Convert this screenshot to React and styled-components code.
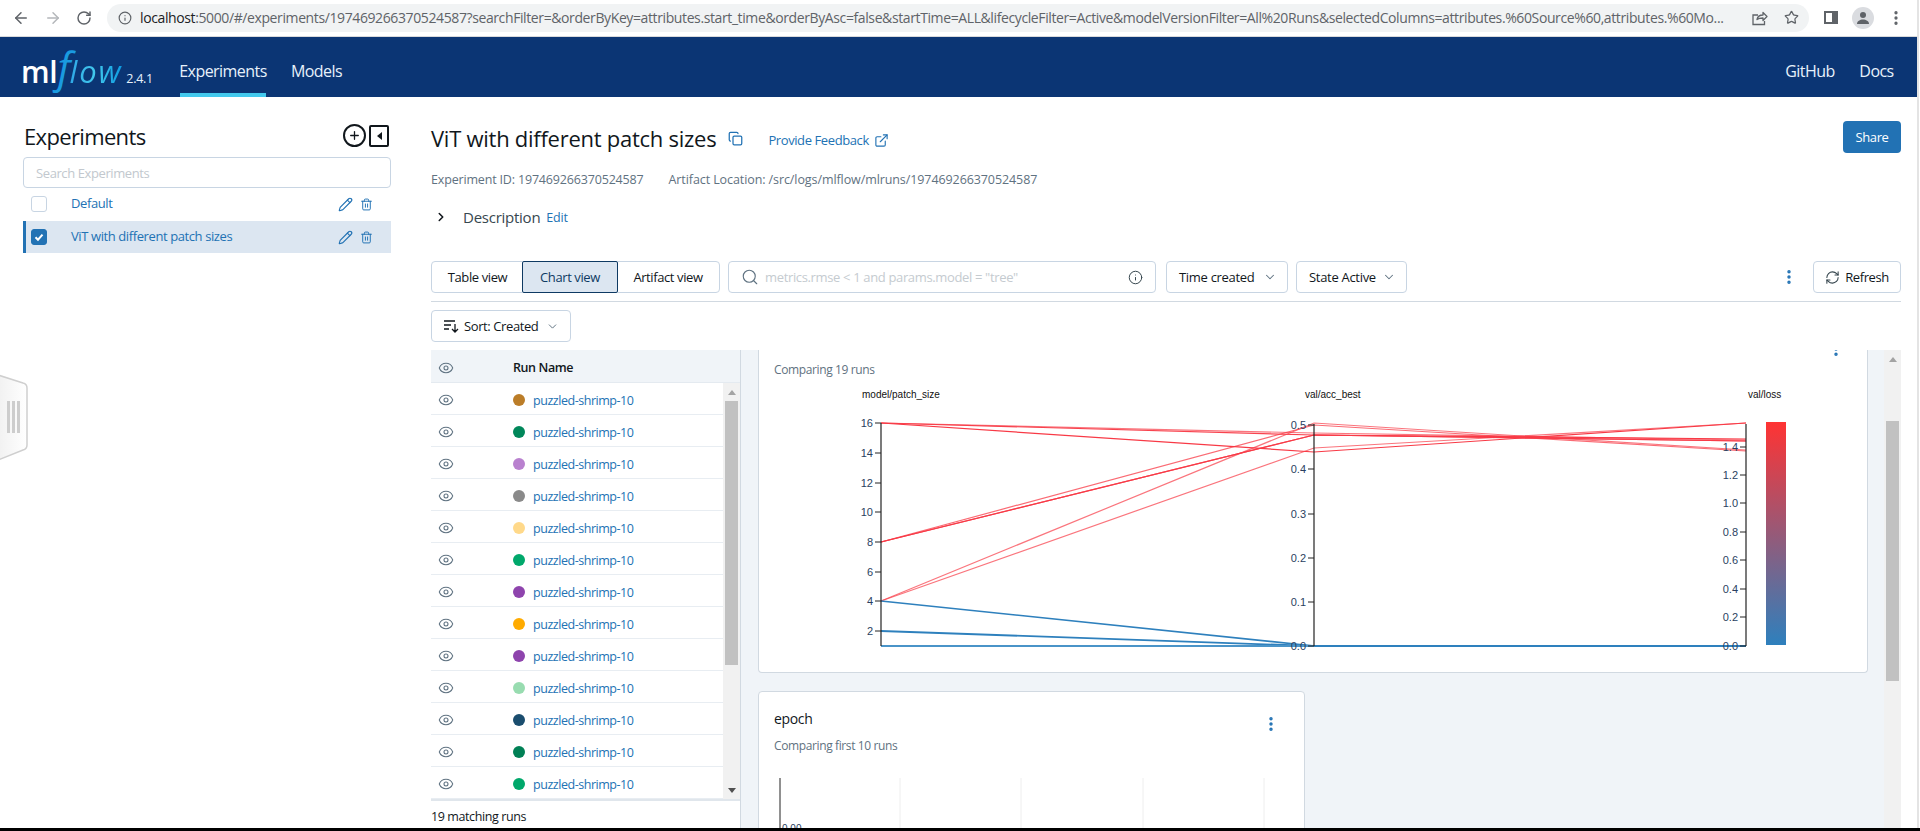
import React from 'react';
import styled, { createGlobalStyle } from 'styled-components';
import { ArrowLeft, ArrowRight, RotateCw, Info, Star, Pencil, Trash2, ChevronDown, ChevronRight, Search, Eye, Copy, ExternalLink, RefreshCw, MoreVertical, Plus } from 'lucide-react';

const UI = '"Open Sans", "Noto Sans", "Liberation Sans", sans-serif';
const BLUE = '#2272b4';
const Global = createGlobalStyle`
  html, body { margin: 0; padding: 0; height: 831px; overflow: hidden; background: #fff; }
  body { font-family: ${UI}; color: #11171c; }
  * { box-sizing: border-box; }
`;
const Frame = styled.div`width: 1920px; height: 831px; display: flex; flex-direction: column; overflow: hidden;`;
const Window = styled.div`flex: 1; min-height: 0; width: 1919px; border-right: 2px solid #e4e4e4; display: flex; flex-direction: column; position: relative;`;
const BottomEdge = styled.div`height: 3px; background: #000; flex: none;`;

const Chrome = styled.div`height: 37px; flex: none; display: flex; align-items: center; border-bottom: 1px solid #d9dadc; background: #fff; padding-bottom: 1px;`;
const ChromeNav = styled.div`width: 107px; padding-left: 12px; display: flex; gap: 14px; align-items: center; color: #5f6368; flex: none;`;
const Omni = styled.div`width: 1702px; height: 28px; border-radius: 14px; background: #f1f3f4; display: flex; align-items: center; padding: 0 10px 0 11px; flex: none;`;
const Url = styled.div`flex: 1; min-width: 0; margin-left: 8px; font-size: 14px; letter-spacing: -0.39px; color: #5f6368; white-space: nowrap; overflow: hidden; b { font-weight: 400; color: #202124; }`;
const OmniIcons = styled.div`display: flex; align-items: center; gap: 16px; margin-left: 6px; color: #5f6368; flex: none;`;
const ChromeRight = styled.div`display: flex; align-items: center; margin-left: 15px; color: #5f6368;`;
const PanelIcon = styled.div`width: 14px; height: 13px; border: 2px solid #5f6368; border-right-width: 6px; margin-right: 14px;`;
const Avatar = styled.div`width: 22px; height: 22px; border-radius: 50%; background: #dadce0; display: flex; align-items: center; justify-content: center; margin-right: 13px;`;

const Nav = styled.div`height: 60px; flex: none; background: #0b3574; display: flex; align-items: stretch; color: #e7f1fb; padding-left: 21px; padding-right: 23px;`;
const Logo = styled.div`width: 159px; height: 60px; display: flex; align-items: baseline; flex: none; overflow: visible; padding-top: 4px;`;
const LogoMl = styled.span`font: 600 30px/52px "Open Sans", sans-serif; color: #fff; letter-spacing: -0.3px;`;
const LogoF = styled.span`font: italic 500 42px/52px "Open Sans", sans-serif; color: #1a9be0;`;
const LogoLow = styled.span`font: italic 500 31px/52px "Open Sans", sans-serif; letter-spacing: 1.8px; margin-left: -1px; background: linear-gradient(90deg, #2fa8e6, #43c9ed 50%, #0c9ae0); -webkit-background-clip: text; background-clip: text; -webkit-text-fill-color: transparent;`;
const LogoVer = styled.span`font-size: 12.5px; margin-left: 4px; color: #e7f1fb; letter-spacing: -0.3px;`;
const NavLink = styled.div`
  font-size: 16px; line-height: 22px; display: flex; align-items: center; padding-top: 12px; margin-right: ${p => p.$mr}px; letter-spacing: -0.55px;
  border-bottom: 4px solid ${p => (p.$active ? '#43c9ed' : 'transparent')};
  width: ${p => p.$w}px; justify-content: center;
`;
const NavSpacer = styled.div`flex: 1;`;

const Body = styled.div`flex: 1; min-height: 0; display: flex;`;
const Sidebar = styled.div`width: 431px; flex: none; padding: 24px 40px 0 23px; position: relative;`;
const SideHead = styled.div`height: 36px; display: flex; justify-content: space-between; align-items: flex-start; padding-right: 2px;`;
const SideTitle = styled.div`font-size: 22px; line-height: 32px; padding-left: 1px; margin-top: -1px; letter-spacing: -0.65px; font-weight: 500;`;
const SideIcons = styled.div`display: flex; align-items: center; gap: 3px; padding-top: 3px;`;
const PlusCircle = styled.div`width: 23px; height: 23px; border: 2px solid #11171c; border-radius: 50%; display: flex; align-items: center; justify-content: center;`;
const ToggleBox = styled.div`width: 20px; height: 22px; border: 2px solid #11171c; border-radius: 2px; display: flex; align-items: center; justify-content: center; &::before { content: ''; border: 4px solid transparent; border-right: 5px solid #11171c; border-left: 0; }`;
const SideSearch = styled.div`height: 31px; border: 1px solid #c8d5e3; border-radius: 4px; display: flex; align-items: center; padding-left: 12px; font-size: 13px; letter-spacing: -0.4px; color: #c2c8ce;`;
const ExpRow = styled.div`
  height: 32px; margin-top: ${p => (p.$selected ? 1 : 0)}px; display: flex; align-items: center;
  background: ${p => (p.$selected ? '#dce6f1' : '#fff')};
  border-left: 3px solid ${p => (p.$selected ? BLUE : 'transparent')};
  padding-left: 5px;
`;
const Check = styled.div`
  width: 16px; height: 16px; border-radius: 3px; flex: none; display: flex; align-items: center; justify-content: center;
  border: 1px solid ${p => (p.$on ? BLUE : '#c8d5e3')}; background: ${p => (p.$on ? BLUE : '#fff')};
`;
const ExpName = styled.div`flex: 1; margin-left: 24px; padding-bottom: 2px; font-size: 13px; letter-spacing: -0.4px; color: ${BLUE};`;
const ExpActions = styled.div`display: flex; align-items: center; gap: 7px; padding-right: 18px; color: ${BLUE};`;

const Main = styled.div`flex: 1; min-width: 0; padding: 24px 16px 0 0; display: flex; flex-direction: column;`;
const HeadRow = styled.div`height: 32px; display: flex; align-items: center;`;
const PageTitle = styled.div`font-size: 22px; letter-spacing: -0.26px; font-weight: 500; color: #11171c; margin-top: 2px;`;
const CopyWrap = styled.div`margin-left: 12px; margin-top: 3px; color: ${BLUE}; display: flex;`;
const Feedback = styled.div`margin-left: 25px; margin-top: 6px; display: flex; align-items: center; gap: 5px; font-size: 13px; letter-spacing: -0.4px; color: ${BLUE};`;
const ShareBtn = styled.div`margin-left: auto; width: 58px; height: 32px; border-radius: 4px; background: ${BLUE}; color: #fff; font-size: 13px; letter-spacing: -0.4px; display: flex; align-items: center; justify-content: center;`;
const Meta = styled.div`margin-top: 16px; height: 20px; display: flex; gap: 25px; align-items: center; font-size: 12.5px; letter-spacing: -0.17px; color: #5f7281;`;
const MetaWide = styled.span`letter-spacing: -0.09px;`;
const Desc = styled.div`margin-top: 16px; height: 24px; display: flex; align-items: center; padding-left: 3px;`;
const DescText = styled.div`margin-left: 15px; font-size: 15px; letter-spacing: -0.25px; color: #37474f;`;
const DescEdit = styled.div`margin-left: 6px; font-size: 12.5px; letter-spacing: -0.2px; color: ${BLUE};`;

const Toolbar = styled.div`margin-top: 32px; height: 32px; display: flex; align-items: stretch;`;
const Tabs = styled.div`display: flex; width: 289px; border: 1px solid #c8d5e3; border-radius: 4px;`;
const Tab = styled.div`
  width: ${p => p.$w}px; display: flex; align-items: center; justify-content: center; font-size: 13px; letter-spacing: -0.4px; color: #11171c;
  ${p => p.$active && 'background:#dce6f1; outline: 1px solid #0e3a63; border-radius: 1px; color:#0e3a63;'}
`;
const Query = styled.div`width: 428px; margin-left: 8px; border: 1px solid #c8d5e3; border-radius: 4px; display: flex; align-items: center; padding: 0 12px; color: #5f7281;`;
const QueryText = styled.div`flex: 1; margin-left: 6px; font-size: 13px; letter-spacing: -0.35px; color: #c5cbd0;`;
const SelectBtn = styled.div`width: ${p => p.$w}px; margin-left: ${p => p.$ml}px; border: 1px solid #c8d5e3; border-radius: 4px; display: flex; align-items: center; justify-content: space-between; padding: 0 10px 0 12px; font-size: 13px; letter-spacing: -0.3px; font-weight: 500; color: #11171c; flex: none;`;
const Kebab = styled.div`margin-left: auto; margin-right: 12px; width: 24px; display: flex; align-items: center; justify-content: center; color: ${BLUE};`;
const RefreshBtn = styled.div`width: 88px; border: 1px solid #c8d5e3; border-radius: 4px; display: flex; align-items: center; justify-content: center; gap: 5px; font-size: 13px; letter-spacing: -0.4px; color: #11171c;`;
const Rule = styled.div`height: 1px; background: #d1d9e1; margin-top: 8px; flex: none;`;
const SortBtn = styled.div`margin-top: 8px; width: 140px; height: 32px; border: 1px solid #c8d5e3; border-radius: 4px; display: flex; align-items: center; padding: 0 11px; font-size: 13px; letter-spacing: -0.4px; color: #11171c; flex: none; span { margin-left: 5px; flex: 1; }`;

const Compare = styled.div`margin-top: 8px; flex: 1; min-height: 0; display: flex;`;
const Runs = styled.div`width: 310px; flex: none; display: flex; flex-direction: column; border-right: 1px solid #d1d9e1;`;
const RunsHead = styled.div`height: 33px; flex: none; background: #f0f4f8; border-bottom: 1px solid #e4eaf0; display: flex; align-items: center; padding-top: 3px; font-size: 12.5px; font-weight: 600; letter-spacing: -0.4px; color: #11171c;`;
const EyeCell = styled.div`width: 82px; padding-left: 7px; color: #5f7281; display: flex; flex: none;`;
const RunsBody = styled.div`height: 418px; flex: none; display: flex; border-bottom: 2px solid #e0e6ec; overflow: hidden;`;
const RunsList = styled.div`flex: 1; min-width: 0;`;
const RunRow = styled.div`height: 32px; display: flex; align-items: center; padding-top: 3px; border-bottom: 1px solid #e8edf2; font-size: 12.5px; letter-spacing: -0.46px; color: ${BLUE};`;
const Dot = styled.div`width: 12px; height: 12px; border-radius: 50%; background: ${p => p.$c}; margin-right: 8px; flex: none;`;
const ScrollTrack = styled.div`width: ${p => p.$w}px; flex: none; background: #f1f1f1; display: flex; flex-direction: column; align-items: center;`;
const Arrow = styled.div`height: ${p => p.$h}px; width: 100%; flex: none; display: flex; align-items: center; justify-content: center; &::before { content: ''; border: 4px solid transparent; ${p => (p.$down ? 'border-top: 5px solid #505050; border-bottom: 0;' : 'border-bottom: 5px solid #a3a3a3; border-top: 0;')} }`;
const Thumb = styled.div`width: ${p => p.$w}px; height: ${p => p.$h}px; margin-top: ${p => p.$mt || 0}px; background: #c1c1c1; flex: none;`;
const Grow = styled.div`flex: 1;`;
const RunsFoot = styled.div`height: 27px; display: flex; align-items: center; padding-top: 3px; font-size: 12.5px; letter-spacing: -0.4px; color: #11171c;`;

const Gutter = styled.div`flex: 1; min-width: 0; background: #f0f4f8; padding-left: 17px; overflow: hidden; display: flex; flex-direction: column; gap: 18px;`;
const Card = styled.div`flex: none; width: ${p => p.$w}px; height: ${p => p.$h}px; background: #fff; border: 1px solid #d1d9e1; ${p => (p.$clipTop ? 'border-top: 0; border-radius: 0 0 4px 4px;' : 'border-radius: 4px;')} overflow: hidden; position: relative;`;
const CardSub = styled.div`font-size: 12px; letter-spacing: -0.38px; color: #5f7281; padding-left: 15px; height: 18px; line-height: 18px; margin-top: ${p => p.$mt}px;`;
const Plot = styled.svg`display: block; margin-top: ${p => p.$mt}px;`;
const CardTitle = styled.div`font-size: 14px; letter-spacing: -0.35px; font-weight: 500; height: 20px; line-height: 20px; padding-left: 15px; margin-top: 17px;`;
const CardKebab = styled.div`position: absolute; right: ${p => p.$right}px; top: ${p => p.$top}px; color: ${BLUE}; display: flex;`;
const MainScroll = styled.div`width: 17px; flex: none; background: #f1f1f1; display: flex; flex-direction: column; align-items: center;`;
const Handle = styled.svg`position: absolute; left: 0; top: 277px;`;

const runColors = ['#bb7d28', '#00875a', '#b981cf', '#8a8a8a', '#ffd98a', '#00a86b', '#8e44ad', '#ffab00', '#8e44ad', '#98dcb0', '#1a4d6e', '#008055', '#00a86b'];

const RED = '#f83a46';
const redLines = [
  [880, 423, 1313, 452, 1745, 423, 1], [880, 423, 1313, 433, 1745, 440, .7], [880, 423, 1313, 435, 1745, 441, .95],
  [880, 542, 1313, 435, 1745, 439, 1], [880, 542, 1313, 435, 1745, 441, .85], [880, 542, 1313, 425, 1745, 451, .75],
  [880, 601, 1313, 423, 1745, 450, .7], [880, 601, 1313, 448, 1745, 423, .7],
];
const ticks1 = [[16, 423], [14, 453], [12, 483], [10, 512], [8, 542], [6, 572], [4, 601], [2, 631]];
const ticks2 = [['0.5', 425], ['0.4', 469], ['0.3', 514], ['0.2', 558], ['0.1', 602], ['0.0', 646]];
const ticks3 = [['1.4', 447], ['1.2', 475], ['1.0', 503], ['0.8', 532], ['0.6', 560], ['0.4', 589], ['0.2', 617], ['0.0', 646]];

const Axis = ({ x, top, ticks }) => (
  <g>
    <line x1={x} x2={x} y1={top} y2={646} stroke="#222" strokeWidth="1.2" />
    {ticks.map(([t, y]) => (
      <g key={t}>
        <line x1={x - 6} x2={x} y1={y} y2={y} stroke="#222" strokeWidth="1" />
        <text x={x - 8} y={y + 4} textAnchor="end" fontSize="11" fill="#2a3f5f" fontFamily='"Liberation Sans", sans-serif'>{t}</text>
      </g>
    ))}
  </g>
);

const Parcoords = () => (
  <Plot $mt={6} width="1108" height="288" viewBox="758 385 1108 288">
    <defs>
      <linearGradient id="cb" x1="0" y1="0" x2="0" y2="1">
        <stop offset="0" stopColor="#ff3333" /><stop offset="1" stopColor="#2e80bd" />
      </linearGradient>
    </defs>
    {[['model/patch_size', 861], ['val/acc_best', 1304], ['val/loss', 1747]].map(([t, x]) => (
      <text key={t} x={x} y={398} fontSize="10" fill="#111" fontFamily='"Liberation Sans", sans-serif'>{t}</text>
    ))}
    {redLines.map((l, i) => (
      <polyline key={i} points={`${l[0]},${l[1]} ${l[2]},${l[3]} ${l[4]},${l[5]}`} fill="none" stroke={RED} strokeOpacity={l[6]} strokeWidth="1.2" />
    ))}
    <polyline points="880,601 1313,646 1745,646" fill="none" stroke="#2e80bd" strokeWidth="1.6" />
    <polyline points="880,631 1313,646" fill="none" stroke="#2e80bd" strokeWidth="1.8" />
    <line x1="880" x2="1313" y1="646" y2="646" stroke="#4a94c8" strokeWidth="2.2" />
    <line x1="1313" x2="1745" y1="646" y2="646" stroke="#2e80bd" strokeWidth="2.2" />
    <Axis x={880} top={423} ticks={ticks1} />
    <Axis x={1313} top={424} ticks={ticks2} />
    <Axis x={1745} top={424} ticks={ticks3} />
    <rect x="1765" y="422" width="20" height="223" fill="url(#cb)" />
  </Plot>
);

const EpochPlot = () => (
  <Plot $mt={13} width="544" height="60" viewBox="758 768 544 60">
    <line x1="779" x2="779" y1="778" y2="828" stroke="#222" />
    {[899, 1020, 1142, 1263].map(x => <line key={x} x1={x} x2={x} y1="778" y2="828" stroke="#eee" />)}
    <text x="781" y="832" fontSize="10" fill="#2a3f5f" fontFamily='"Liberation Sans", sans-serif'>0.00</text>
  </Plot>
);

export default function App() {
  return (
    <Frame>
      <Global />
      <Window>
        <Chrome>
          <ChromeNav>
            <ArrowLeft size={18} strokeWidth={2} color="#5f6368" />
            <ArrowRight size={18} strokeWidth={2} color="#b4b7ba" />
            <RotateCw size={16} strokeWidth={2.2} />
          </ChromeNav>
          <Omni>
            <Info size={14} strokeWidth={2} color="#5f6368" />
            <Url><b>localhost</b>:5000/#/experiments/197469266370524587?searchFilter=&amp;orderByKey=attributes.start_time&amp;orderByAsc=false&amp;startTime=ALL&amp;lifecycleFilter=Active&amp;modelVersionFilter=All%20Runs&amp;selectedColumns=attributes.%60Source%60,attributes.%60Mo...</Url>
            <OmniIcons>
              <svg width="16" height="16" viewBox="0 0 16 16" fill="none" stroke="#5f6368" strokeWidth="1.3"><path d="M5 9.5c.6-3 3-4.5 6-4.5V2.5L15 6.5l-4 4V8c-2.500 0-4.500.3-6 1.500z" strokeLinejoin="round" /><path d="M12.500 11v3.500H1V5h5" /></svg>
              <Star size={15} strokeWidth={2} />
            </OmniIcons>
          </Omni>
          <ChromeRight>
            <PanelIcon />
            <Avatar><svg width="14" height="14" viewBox="0 0 14 14" fill="#5f6368"><circle cx="7" cy="4" r="3" /><path d="M1 13c0-3 3-4.500 6-4.500s6 1.500 6 4.500z" /></svg></Avatar>
            <MoreVertical size={18} strokeWidth={2.4} />
          </ChromeRight>
        </Chrome>
        <Nav>
          <Logo><LogoMl>ml</LogoMl><LogoF>f</LogoF><LogoLow>low</LogoLow><LogoVer>2.4.1</LogoVer></Logo>
          <NavLink $active $w={86} $mr={24}>Experiments</NavLink>
          <NavLink $w={53} $mr={24}>Models</NavLink>
          <NavSpacer />
          <NavLink $w={50} $mr={24}>GitHub</NavLink>
          <NavLink $w={35} $mr={0}>Docs</NavLink>
        </Nav>
        <Body>
          <Sidebar>
            <SideHead>
              <SideTitle>Experiments</SideTitle>
              <SideIcons>
                <PlusCircle><Plus size={13} strokeWidth={2.4} /></PlusCircle>
                <ToggleBox />
              </SideIcons>
            </SideHead>
            <SideSearch>Search Experiments</SideSearch>
            <ExpRow>
              <Check />
              <ExpName>Default</ExpName>
              <ExpActions><Pencil size={15} strokeWidth={1.8} /><Trash2 size={13} strokeWidth={1.8} /></ExpActions>
            </ExpRow>
            <ExpRow $selected>
              <Check $on><svg width="10" height="10" viewBox="0 0 10 10" fill="none" stroke="#fff" strokeWidth="2"><path d="M1.500 5.200l2.500 2.500 4.500-5" /></svg></Check>
              <ExpName>ViT with different patch sizes</ExpName>
              <ExpActions><Pencil size={15} strokeWidth={1.8} /><Trash2 size={13} strokeWidth={1.8} /></ExpActions>
            </ExpRow>
            <Handle width="30" height="90" viewBox="0 0 30 90">
              <defs><linearGradient id="hg" x1="0" x2="1" y1="0" y2="0"><stop offset="0" stopColor="#f1f1f1" /><stop offset="1" stopColor="#fff" /></linearGradient></defs>
              <path d="M-2 1 L23 9 Q27 10 27 14 L27 71 Q27 75 23 76 L-2 86 Z" fill="url(#hg)" stroke="#cfcfcf" strokeWidth="1.500" />
              <rect x="7" y="27" width="3" height="32" fill="#cdcdcd" /><rect x="12" y="27" width="3" height="32" fill="#cdcdcd" /><rect x="17" y="27" width="3" height="32" fill="#cdcdcd" />
            </Handle>
          </Sidebar>
          <Main>
            <HeadRow>
              <PageTitle>ViT with different patch sizes</PageTitle>
              <CopyWrap><Copy size={15} strokeWidth={2} /></CopyWrap>
              <Feedback>Provide Feedback <ExternalLink size={15} strokeWidth={1.8} /></Feedback>
              <ShareBtn>Share</ShareBtn>
            </HeadRow>
            <Meta><span>Experiment ID: 197469266370524587</span><MetaWide>Artifact Location: /src/logs/mlflow/mlruns/197469266370524587</MetaWide></Meta>
            <Desc><ChevronRight size={14} strokeWidth={2.6} /><DescText>Description</DescText><DescEdit>Edit</DescEdit></Desc>
            <Toolbar>
              <Tabs>
                <Tab $w={91}>Table view</Tab>
                <Tab $w={94} $active>Chart view</Tab>
                <Tab $w={102}>Artifact view</Tab>
              </Tabs>
              <Query>
                <Search size={18} strokeWidth={1.5} />
                <QueryText>metrics.rmse &lt; 1 and params.model = "tree"</QueryText>
                <Info size={15} strokeWidth={1.6} color="#37474f" />
              </Query>
              <SelectBtn $w={122} $ml={10}>Time created <ChevronDown size={14} strokeWidth={1.8} color="#5f7281" /></SelectBtn>
              <SelectBtn $w={111} $ml={8}>State Active <ChevronDown size={14} strokeWidth={1.8} color="#5f7281" /></SelectBtn>
              <Kebab><MoreVertical size={18} strokeWidth={2.6} /></Kebab>
              <RefreshBtn><RefreshCw size={15} strokeWidth={1.7} color="#37474f" />Refresh</RefreshBtn>
            </Toolbar>
            <Rule />
            <SortBtn>
              <svg width="16" height="14" viewBox="0 0 16 14" fill="none" stroke="#11171c" strokeWidth="1.300"><path d="M1 2h11M1 6h7M1 10h5M12 5v8M9 10l3 3 3-3" /></svg>
              <span>Sort: Created</span>
              <ChevronDown size={13} strokeWidth={1.8} color="#5f7281" />
            </SortBtn>
            <Compare>
              <Runs>
                <RunsHead><EyeCell><Eye size={16} strokeWidth={1.6} /></EyeCell>Run Name</RunsHead>
                <RunsBody>
                  <RunsList>
                    {runColors.map((c, i) => (
                      <RunRow key={i}><EyeCell><Eye size={16} strokeWidth={1.6} /></EyeCell><Dot $c={c} />puzzled-shrimp-10</RunRow>
                    ))}
                  </RunsList>
                  <ScrollTrack $w={17}>
                    <Arrow $h={18} />
                    <Thumb $w={13} $h={264} />
                    <Grow />
                    <Arrow $h={18} $down />
                  </ScrollTrack>
                </RunsBody>
                <RunsFoot>19 matching runs</RunsFoot>
              </Runs>
              <Gutter>
                <Card $clipTop $w={1110} $h={323}>
                  <CardKebab $right={22} $top={-10}><MoreVertical size={18} strokeWidth={2.6} /></CardKebab>
                  <CardSub $mt={11}>Comparing 19 runs</CardSub>
                  <Parcoords />
                </Card>
                <Card $w={547} $h={160}>
                  <CardTitle>epoch</CardTitle>
                  <CardKebab $right={24} $top={23}><MoreVertical size={18} strokeWidth={2.6} /></CardKebab>
                  <CardSub $mt={8}>Comparing first 10 runs</CardSub>
                  <EpochPlot />
                </Card>
              </Gutter>
              <MainScroll>
                <Arrow $h={18} />
                <Thumb $w={13} $h={260} $mt={53} />
              </MainScroll>
            </Compare>
          </Main>
        </Body>
      </Window>
      <BottomEdge />
    </Frame>
  );
}
